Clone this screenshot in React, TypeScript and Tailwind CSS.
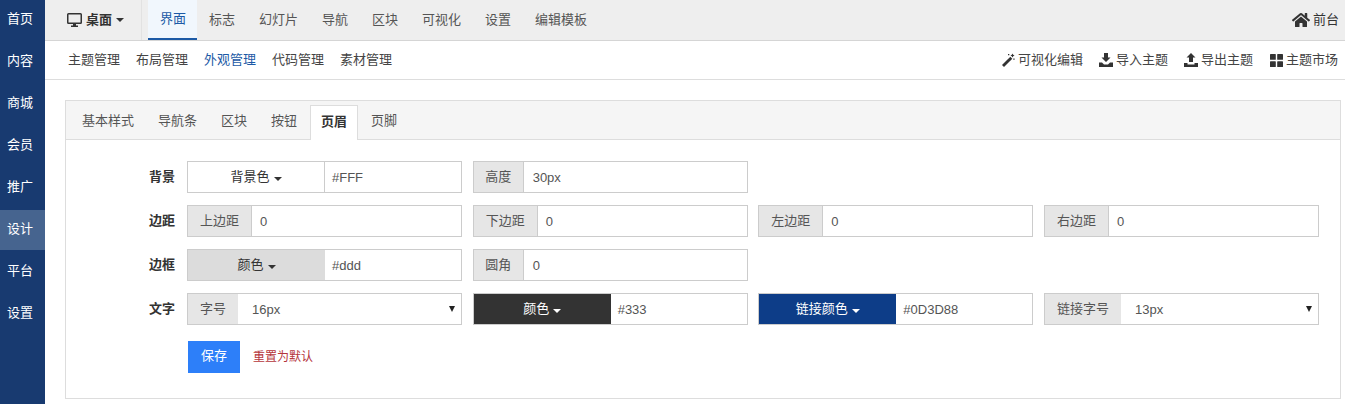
import { ReactNode } from 'react';
import { FaHome } from 'react-icons/fa';

const sideItems = ['首页', '内容', '商城', '会员', '推广', '设计', '平台', '设置'];
const topTabs = ['界面', '标志', '幻灯片', '导航', '区块', '可视化', '设置', '编辑模板'];
const subLinks = ['主题管理', '布局管理', '外观管理', '代码管理', '素材管理'];
const panelTabs = ['基本样式', '导航条', '区块', '按钮', '页眉', '页脚'];

function Caret({ className = 'border-t-[#333]' }: { className?: string }) {
  return <span className={`inline-block ml-[4px] w-0 h-0 border-x-[4px] border-x-transparent border-t-[4px] ${className}`} />;
}

function DesktopIcon() {
  return (
    <svg viewBox="0 0 15 14" className="w-[15px] h-[14px] mr-[4px] shrink-0 fill-[#333]">
      <path d="M1.500 0h12A1.500 1.500 0 0 1 15 1.500v8a1.500 1.500 0 0 1-1.500 1.500h-12A1.500 1.500 0 0 1 0 9.500v-8A1.500 1.500 0 0 1 1.500 0zM1.500 1.500v8h12v-8z" fillRule="evenodd" />
      <path d="M6 11h3v1.500h2V14H4v-1.500h2z" />
    </svg>
  );
}

function WandIcon() {
  return (
    <svg viewBox="0 0 14 14" className="w-[14px] h-[14px] fill-[#333]">
      <path d="M9.300 3.700l2 2L3 14l-2-2z" />
      <path d="M11.500 0.500l0.700 1.300 1.300 0.700-1.300 0.700-0.700 1.300-0.700-1.300-1.300-0.700 1.300-0.700zM7 1h1.300v1.300H7zM12.300 5.500h1.300v1.300h-1.300z" />
    </svg>
  );
}

function ImportIcon() {
  return (
    <svg viewBox="0 0 14 14" className="w-[14px] h-[14px] fill-[#333]">
      <path d="M5 0h4v4.500h2.500L7 9 2.500 4.500H5z" />
      <path d="M0 9.500h3L5 11.500h4l2-2h3V14H0z" />
    </svg>
  );
}

function ExportIcon() {
  return (
    <svg viewBox="0 0 14 14" className="w-[14px] h-[14px] fill-[#333]">
      <path d="M7 0l4.500 4.500H9V9H5V4.500H2.500z" />
      <path d="M0 10h3.500v1.500h7V10H14v4H0z" />
    </svg>
  );
}

function GridIcon() {
  return (
    <svg viewBox="0 0 13 13" className="w-[13px] h-[13px] fill-[#333]">
      <rect x="0" y="0" width="5.800" height="5.800" rx="0.600" />
      <rect x="7.200" y="0" width="5.800" height="5.800" rx="0.600" />
      <rect x="0" y="7.200" width="5.800" height="5.800" rx="0.600" />
      <rect x="7.200" y="7.200" width="5.800" height="5.800" rx="0.600" />
    </svg>
  );
}

function Row({ label, children }: { label: string; children: ReactNode }) {
  return (
    <div className="flex h-[32px] mb-[12px]">
      <div className="w-[110px] shrink-0 text-right pr-[12px] font-bold leading-[31px] text-[#333]">{label}</div>
      <div className="grid grid-cols-[275px_275px_275px_275px] gap-x-[10.670px] flex-1">{children}</div>
    </div>
  );
}

function Field({ addon, value, wide }: { addon: string; value: string; wide?: boolean }) {
  return (
    <div className="flex h-[32px] border border-[#ccc]">
      <div className={`${wide ? 'w-[64px]' : 'w-[50px]'} shrink-0 bg-[#e6e6e6] border-r border-[#ccc] text-center leading-[29px] text-[#555]`}>{addon}</div>
      <div className={`flex-1 bg-white ${wide ? 'pl-[8px]' : 'pl-[9px]'} leading-[31px] text-[#555]`}>{value}</div>
    </div>
  );
}

function ColorField({ label, value, btn, caret }: { label: string; value: string; btn: string; caret?: string }) {
  return (
    <div className="flex h-[32px] border border-[#ccc]">
      <div className={`w-[137px] shrink-0 text-center leading-[29px] ${btn}`}>
        {label}
        <Caret className={caret} />
      </div>
      <div className="flex-1 bg-white pl-[7px] leading-[31px] text-[#555]">{value}</div>
    </div>
  );
}

function SelectField({ addon, value, w }: { addon: string; value: string; w: string }) {
  return (
    <div className="flex h-[32px] border border-[#ccc]">
      <div className={`${w} shrink-0 bg-[#e6e6e6] text-center leading-[29px] text-[#555]`}>{addon}</div>
      <div className="flex-1 flex items-center justify-between bg-white pl-[14px] pr-[6px] text-[#555]">
        <span className="pt-[1px]">{value}</span>
        <span className="w-0 h-0 border-x-[3.500px] border-x-transparent border-t-[6px] border-t-[#222]" />
      </div>
    </div>
  );
}

export default function App() {
  return (
    <div className="flex w-[1345px] h-[404px] overflow-hidden bg-white text-[13px] text-[#333] font-['Liberation_Sans','Noto_Sans_CJK_SC',sans-serif]">
      {/* Sidebar */}
      <div className="w-[45px] shrink-0 bg-[#183a70]">
        {sideItems.map((item) => (
          <div
            key={item}
            className={
              item === '设计'
                ? 'h-[40px] mb-[2px] pl-[7px] leading-[38px] text-white bg-[#46648f]'
                : 'h-[42px] pl-[7px] leading-[38px] text-white'
            }
          >
            {item}
          </div>
        ))}
      </div>

      <div className="flex-1 min-w-0">
        {/* Top bar */}
        <div className="h-[41px] flex items-center bg-[#eee] border-b border-[#d5d5d5] pr-[6px]">
          <div className="w-[97px] h-full flex items-center pl-[22px] font-bold border-r border-[#e2e2e2] mr-[6px]">
            <DesktopIcon />
            桌面
            <Caret />
          </div>
          {topTabs.map((tab) => (
            <div
              key={tab}
              className={
                tab === '界面'
                  ? 'h-full pl-[12px] pr-[11px] flex items-center bg-[#f1f7fd] text-[#1c5aa6] border-b-2 border-[#1c5aa6]'
                  : 'h-full px-[12px] flex items-center text-[#555]'
              }
            >
              {tab}
            </div>
          ))}
          <div className="ml-auto flex items-center text-[#333]">
            <FaHome className="w-[18px] h-[18px] mr-[3px]" />
            前台
          </div>
        </div>

        {/* Sub bar */}
        <div className="h-[39px] flex items-center justify-between border-b border-[#ddd] pl-[23px] pr-[7px]">
          <div className="flex gap-[16px]">
            {subLinks.map((link) => (
              <span key={link} className={link === '外观管理' ? 'text-[#1c5aa6]' : 'text-[#444]'}>{link}</span>
            ))}
          </div>
          <div className="flex items-center text-[#444]">
            <span className="flex items-center gap-[3px]"><WandIcon />可视化编辑</span>
            <span className="flex items-center gap-[3px] ml-[16px]"><ImportIcon />导入主题</span>
            <span className="flex items-center gap-[3px] ml-[16px]"><ExportIcon />导出主题</span>
            <span className="flex items-center gap-[3px] ml-[17px]"><GridIcon />主题市场</span>
          </div>
        </div>

        {/* Panel */}
        <div className="mt-[20px] ml-[20px] w-[1276px] h-[299px] border border-[#ddd]">
          <div className="h-[39px] flex bg-[#f5f5f5] border-b border-[#ddd] pl-[4px]">
            {panelTabs.map((tab) => (
              <div
                key={tab}
                className={
                  tab === '页眉'
                    ? 'h-[35px] mt-[4px] px-[10px] mx-[1px] bg-white border border-[#ddd] border-b-0 font-bold leading-[31px]'
                    : 'h-full px-[12px] leading-[39px] text-[#555]'
                }
              >
                {tab}
              </div>
            ))}
          </div>

          <div className="pt-[21px] pl-[11px]">
            <Row label="背景">
              <ColorField label="背景色" value="#FFF" btn="bg-white border-r border-[#ccc] text-[#333]" />
              <Field addon="高度" value="30px" />
            </Row>
            <Row label="边距">
              <Field addon="上边距" value="0" wide />
              <Field addon="下边距" value="0" wide />
              <Field addon="左边距" value="0" wide />
              <Field addon="右边距" value="0" wide />
            </Row>
            <Row label="边框">
              <ColorField label="颜色" value="#ddd" btn="bg-[#dcdcdc] text-[#333]" />
              <Field addon="圆角" value="0" />
            </Row>
            <Row label="文字">
              <SelectField addon="字号" value="16px" w="w-[50px]" />
              <ColorField label="颜色" value="#333" btn="bg-[#333] text-white" caret="border-t-white" />
              <ColorField label="链接颜色" value="#0D3D88" btn="bg-[#0d3d88] text-white" caret="border-t-white" />
              <SelectField addon="链接字号" value="13px" w="w-[76px]" />
            </Row>
            <div className="flex items-center ml-[111px] mt-[16px]">
              <div className="w-[52px] h-[32px] bg-[#2d7ff9] text-white text-center leading-[30px]">保存</div>
              <span className="ml-[13px] text-[12px] text-[#b5353b]">重置为默认</span>
            </div>
          </div>
        </div>
      </div>
    </div>
  );
}
